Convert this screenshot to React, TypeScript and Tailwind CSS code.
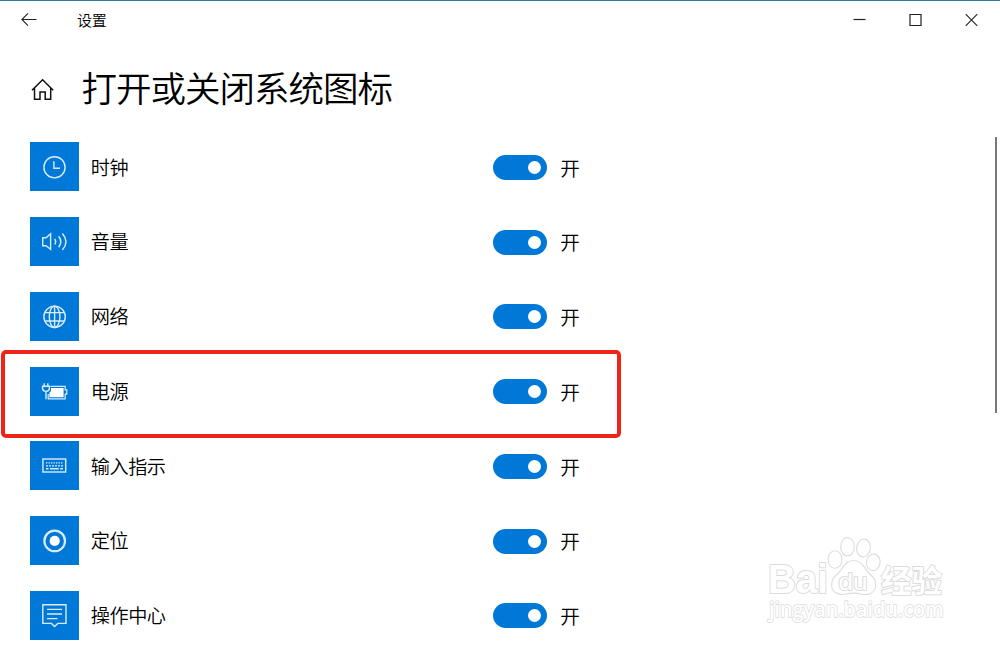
import type { ReactNode } from 'react';

const stroke = { fill: 'none', stroke: '#d9ecfb', strokeWidth: 1.4 };

const ClockIcon = () => (
  <>
    <circle cx="24.5" cy="25.3" r="10.6" {...stroke} />
    <path d="M23.9 19.3V26.2H30" {...stroke} />
  </>
);

const VolumeIcon = () => (
  <>
    <path d="M12.7 20.7H16L20.6 16.7V32.3L16 28.7H12.7Z" {...stroke} />
    <path d="M24.6 22Q26.8 24.7 24.6 27.5M28.6 19.3Q33 24.7 28.6 30.2M32.4 16.5Q39.5 24.7 32.4 33" {...stroke} />
  </>
);

const GlobeIcon = () => (
  <>
    <circle cx="24.6" cy="24.8" r="10.7" {...stroke} />
    <ellipse cx="24.6" cy="24.8" rx="5.3" ry="10.7" {...stroke} />
    <path d="M24.6 14V35.5M15 20.6H34.2M15 29H34.2" {...stroke} />
  </>
);

const PowerIcon = () => (
  <>
    <path d="M14.2 16.2V19M17.8 16.2V19M16 24.4V32.3" {...stroke} />
    <path d="M12.6 19.3H19.4V21.5Q19.4 24 16 24.4Q12.6 24 12.6 21.5Z" {...stroke} />
    <path d="M20.5 19.3H35.2V22.8H36.8V27.2H35.2V31.9H18.2V27" {...stroke} strokeWidth={1.2} />
    <path d="M21 21H33.6V30.2H19.4V25.7L21 24Z" fill="#fff" />
  </>
);

const KeyboardIcon = () => (
  <>
    <rect x="12.9" y="18" width="22.8" height="13" {...stroke} />
    <path d="M16 21.9H33" {...stroke} strokeDasharray="1.4 1.1" />
    <path d="M16 24.9H33" {...stroke} strokeDasharray="2 1" />
    <path d="M16 27.8H18.5M20 27.8H28.8M30.2 27.8H33" {...stroke} />
  </>
);

const LocationIcon = () => (
  <>
    <circle cx="24.7" cy="24.9" r="10.3" {...stroke} strokeWidth={2.2} />
    <circle cx="24.7" cy="24.9" r="5.1" fill="#fff" />
  </>
);

const ActionIcon = () => (
  <>
    <path d="M12.8 13.7H36V32.4H27.8L24.6 35.6L21.4 32.4H12.8Z" {...stroke} />
    <path d="M17 18.4H32M17 23H32M17 27.6H27.5" {...stroke} />
  </>
);

const items: { label: string; icon: ReactNode }[] = [
  { label: '时钟', icon: <ClockIcon /> },
  { label: '音量', icon: <VolumeIcon /> },
  { label: '网络', icon: <GlobeIcon /> },
  { label: '电源', icon: <PowerIcon /> },
  { label: '输入指示', icon: <KeyboardIcon /> },
  { label: '定位', icon: <LocationIcon /> },
  { label: '操作中心', icon: <ActionIcon /> },
];

const Row = ({ label, icon }: { label: string; icon: ReactNode }) => (
  <li className="flex h-[74.75px] items-start">
    <div className="flex h-[49px] w-full items-center">
      <svg className="size-[49px] shrink-0 bg-[#0078d7]" viewBox="0 0 49 49">{icon}</svg>
      <span className="ml-[12.2px] mt-[0.8px] w-[402px] text-[19.2px] leading-none tracking-[-0.5px]">{label}</span>
      <button className="mt-[1px] flex h-[25px] w-[54px] items-center justify-end rounded-full bg-[#0078d7] pr-[6px]" aria-label={label}>
        <span className="size-[13px] rounded-full bg-white" />
      </button>
      <span className="ml-[13.5px] mt-[1px] text-[19.5px] leading-none">开</span>
    </div>
  </li>
);

const Watermark = () => (
  <svg className="absolute left-[755px] top-[524px] overflow-visible" width="200" height="110" viewBox="0 0 200 110">
    <g fill="#fff" stroke="#dcdcdc" strokeWidth="1.1">
      <ellipse cx="80" cy="34.5" rx="7" ry="8.8" />
      <ellipse cx="92.5" cy="21.8" rx="6.8" ry="9.2" />
      <ellipse cx="108.5" cy="23" rx="6.8" ry="9" transform="rotate(8 108.5 23)" />
      <ellipse cx="118.3" cy="37.3" rx="6.8" ry="8.3" transform="rotate(8 118.3 37.3)" />
      <path d="M98.5 35.5C107 35.5 109 43 114.5 48.5C119 53 122 56 120.5 62C119 69 112 70.5 106 69Q98.5 67.2 91 69C84 70.5 77.5 68 76.7 61.5C76 55 79 52 83.5 48C88 43.5 90 35.5 98.5 35.5Z" />
      <g fontFamily="'Liberation Sans', 'Noto Sans CJK SC', sans-serif" fontWeight="bold" strokeWidth="2" strokeLinejoin="round" paintOrder="stroke">
        <text x="13" y="68" fontSize="41" textLength="60" lengthAdjust="spacingAndGlyphs">Bai</text>
        <text x="83.5" y="64.5" fontSize="24" textLength="29" lengthAdjust="spacingAndGlyphs" fontWeight="normal">du</text>
        <text x="126" y="66.5" fontSize="31" textLength="61" lengthAdjust="spacingAndGlyphs">经验</text>
      </g>
      <text x="14" y="92" fontSize="21.5" textLength="175" lengthAdjust="spacingAndGlyphs" fontFamily="'Open Sans', sans-serif" fontWeight="600" strokeWidth="1.5" paintOrder="stroke">jingyan.baidu.com</text>
    </g>
  </svg>
);

export default function App() {
  return (
    <div className="relative h-[645px] w-[1000px] overflow-hidden border-t border-[#33789f] bg-white font-['Noto_Sans_CJK_SC','Noto_Sans',sans-serif] font-[350] text-black">
      <header className="flex h-[38px] items-center justify-between px-[21px]">
        <div className="flex items-center">
          <svg width="16" height="16" viewBox="0 0 16 16" fill="none" stroke="#222" strokeWidth="1.1">
            <path d="M15.5 7.5H1M7 1.3L.9 7.5L7 13.7" />
          </svg>
          <span className="-mt-[1px] ml-[40px] text-[15px] leading-none tracking-[-0.3px]">设置</span>
        </div>
        <div className="flex gap-[42px]">
          <svg width="14" height="14" viewBox="0 0 14 14" stroke="#222" strokeWidth="1.2"><path d="M.5 6.5H12.5" /></svg>
          <svg width="14" height="14" viewBox="0 0 14 14" fill="none" stroke="#222" strokeWidth="1.2"><path d="M1 1.5H12V12.5H1Z" /></svg>
          <svg width="14" height="14" viewBox="0 0 14 14" stroke="#222" strokeWidth="1.1"><path d="M.7 1.2L12.3 12.8M12.3 1.2L.7 12.8" /></svg>
        </div>
      </header>
      <div className="flex h-[103.4px] items-start pl-[31px]">
        <svg className="mt-[39px]" width="24" height="24" viewBox="0 0 24 24" fill="none" stroke="#111" strokeWidth="1.5">
          <path d="M1 12.3L11.6 1.8L22.2 12.3M3.5 10V21.2H9V13.9H14.2V21.2H19.7V10" />
        </svg>
        <h1 className="ml-[26.5px] mt-[30px] text-[35.5px] leading-[35px] tracking-[-1px]">打开或关闭系统图标</h1>
      </div>
      <main className="flex justify-between pl-[29.6px] pr-[2.6px]">
        <ul className="w-[600px]">
          {items.map((item) => <Row key={item.label} {...item} />)}
        </ul>
        <div className="-mt-[5px] h-[276px] w-[2px] bg-[#787878]" />
      </main>
      <div className="absolute left-[1px] top-[348.5px] h-[88.5px] w-[620px] rounded-[5px] border-4 border-[#ee2419]" />
      <Watermark />
    </div>
  );
}
